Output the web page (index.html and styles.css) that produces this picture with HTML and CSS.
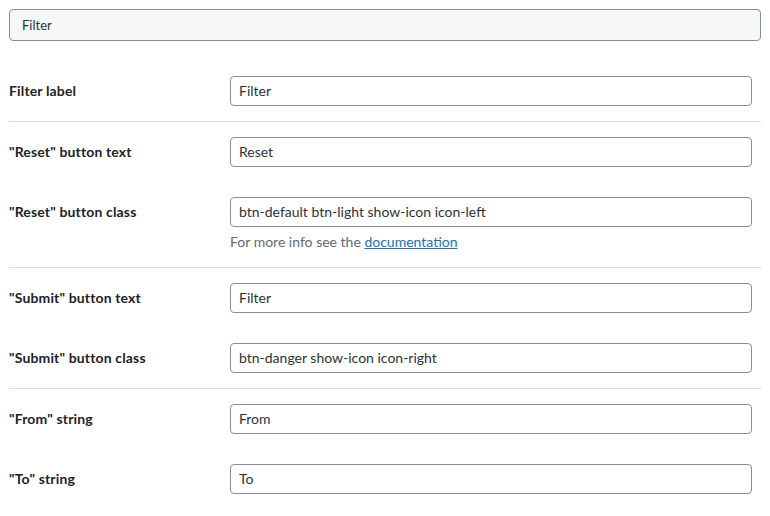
FILE: index.html
```html
<!DOCTYPE html>
<html lang="en">
<head>
<meta charset="utf-8">
<title>Filter settings</title>
<link rel="stylesheet" href="styles.css">
</head>
<body>
<div class="page">
  <div class="panel-title">Filter</div>

  <div class="group">
    <div class="row">
      <label class="label">Filter label</label>
      <div class="field"><input class="input" type="text" value="Filter"></div>
    </div>
  </div>

  <div class="group">
    <div class="row">
      <label class="label">"Reset" button text</label>
      <div class="field"><input class="input" type="text" value="Reset"></div>
    </div>
    <div class="row">
      <label class="label">"Reset" button class</label>
      <div class="field">
        <input class="input" type="text" value="btn-default btn-light show-icon icon-left">
        <p class="description">For more info see the <a href="#">documentation</a></p>
      </div>
    </div>
  </div>

  <div class="group">
    <div class="row">
      <label class="label">"Submit" button text</label>
      <div class="field"><input class="input" type="text" value="Filter"></div>
    </div>
    <div class="row">
      <label class="label">"Submit" button class</label>
      <div class="field"><input class="input" type="text" value="btn-danger show-icon icon-right"></div>
    </div>
  </div>

  <div class="group">
    <div class="row">
      <label class="label">"From" string</label>
      <div class="field"><input class="input" type="text" value="From"></div>
    </div>
    <div class="row">
      <label class="label">"To" string</label>
      <div class="field"><input class="input" type="text" value="To"></div>
    </div>
  </div>
</div>
</body>
</html>
```

FILE: styles.css
```css
html, body {
  margin: 0;
  padding: 0;
  background: #ffffff;
}

body {
  font-family: Lato, "Liberation Sans", Arial, sans-serif;
  color: #1d2327;
  font-size: 14px;
}

.page {
  padding: 9px 9px 8px 9px;
}

.panel-title {
  box-sizing: border-box;
  height: 32px;
  line-height: 30px;
  padding: 0 12px;
  background: #f6f7f7;
  border: 1px solid #8c8f94;
  border-radius: 4px;
  font-size: 13px;
  color: #2c3338;
  margin-bottom: 20px;
}

.group + .group {
  border-top: 1px solid #dcdcde;
}

.row {
  display: grid;
  grid-template-columns: 221px 1fr;
  padding: 15px 0;
  align-items: start;
}

.label {
  font-weight: 700;
  font-size: 14px;
  line-height: 30px;
  letter-spacing: 0.15px;
  color: #1d2327;
}

.field {
  display: flex;
  flex-direction: column;
}

.input {
  box-sizing: border-box;
  width: 522px;
  height: 30px;
  margin: 0;
  padding: 0 8px 1px 8px;
  border: 1px solid #8c8f94;
  border-radius: 4px;
  background: #ffffff;
  font-family: inherit;
  font-size: 14px;
  color: #2c3338;
  outline: none;
}

.description {
  margin: 5px 0 0 0;
  font-size: 14px;
  line-height: 20px;
  color: #646970;
}

.description a {
  color: #2271b1;
  text-decoration: underline;
}
```
